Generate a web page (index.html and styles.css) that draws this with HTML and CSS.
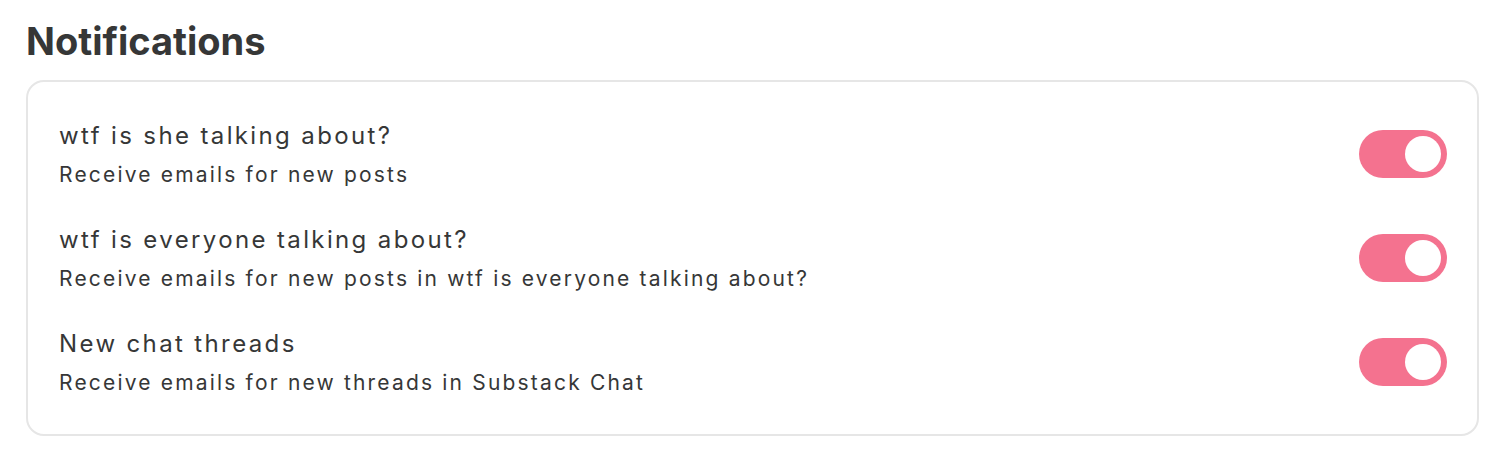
FILE: index.html
```html
<!DOCTYPE html>
<html lang="en">
<head>
<meta charset="utf-8">
<title>Notifications</title>
<link rel="stylesheet" href="styles.css">
</head>
<body>
<main class="page">
  <h1 class="heading">Notifications</h1>
  <section class="card">
    <div class="row">
      <div class="text">
        <div class="title">wtf is she talking about?</div>
        <div class="sub">Receive emails for new posts</div>
      </div>
      <span class="toggle on"><span class="knob"></span></span>
    </div>
    <div class="row">
      <div class="text">
        <div class="title">wtf is everyone talking about?</div>
        <div class="sub">Receive emails for new posts in wtf is everyone talking about?</div>
      </div>
      <span class="toggle on"><span class="knob"></span></span>
    </div>
    <div class="row">
      <div class="text">
        <div class="title">New chat threads</div>
        <div class="sub">Receive emails for new threads in Substack Chat</div>
      </div>
      <span class="toggle on"><span class="knob"></span></span>
    </div>
  </section>
</main>
</body>
</html>
```
FILE: styles.css
```css
html, body {
  margin: 0;
  padding: 0;
  background: #ffffff;
}
body {
  font-family: Inter, "Noto Sans", "Liberation Sans", sans-serif;
  color: #363737;
}
.page {
  padding: 0 27px 0 26px;
}
.heading {
  margin: 0;
  padding-top: 18px;
  font-size: 38px;
  line-height: 46px;
  font-weight: 700;
  letter-spacing: 0;
  color: #363737;
  margin-bottom: 16px;
}
.card {
  border: 2px solid #e6e6e6;
  border-radius: 18px;
  padding: 20px 30px 20px 31px;
  display: flex;
  flex-direction: column;
}
.row {
  display: flex;
  align-items: center;
  justify-content: space-between;
  height: 104px;
}
.text {
  display: flex;
  flex-direction: column;
  gap: 11px;
}
.title {
  font-size: 24px;
  line-height: 30px;
  font-weight: 400;
  letter-spacing: 2.37px;
}
.sub {
  font-size: 21px;
  line-height: 26px;
  font-weight: 400;
  letter-spacing: 2.18px;
}
.toggle {
  width: 88px;
  height: 48px;
  border-radius: 24px;
  background: #f4728f;
  display: flex;
  align-items: center;
  justify-content: flex-end;
  padding: 0 6px;
  box-sizing: border-box;
  flex-shrink: 0;
}
.knob {
  width: 36px;
  height: 36px;
  border-radius: 50%;
  background: #ffffff;
}
```
